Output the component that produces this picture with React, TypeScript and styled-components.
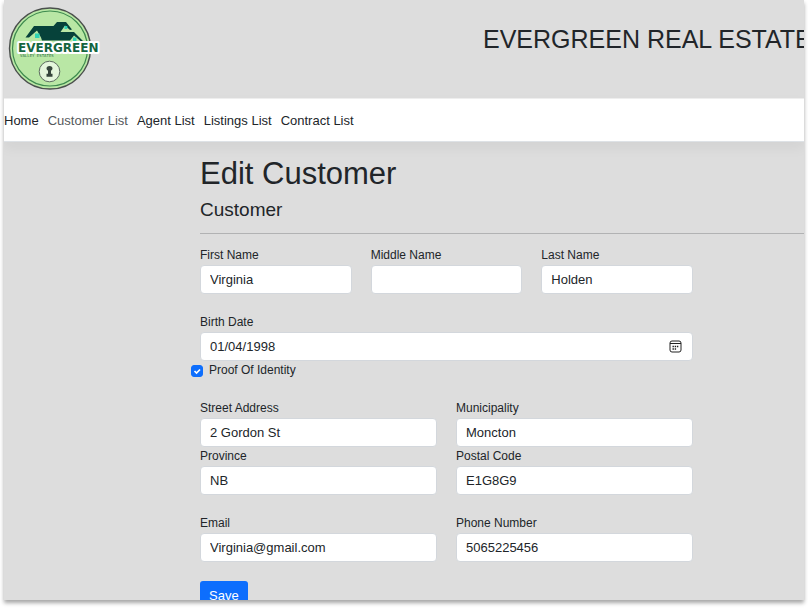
import React from "react";
import styled, { createGlobalStyle } from "styled-components";

const GlobalStyle = createGlobalStyle`
  *, *::before, *::after { box-sizing: border-box; }
  body {
    margin: 0;
    background: #fff;
    color: #212529;
    font-family: "Liberation Sans", Arial, sans-serif;
    font-size: 12px;
    line-height: 19px;
  }
`;

const Stage = styled.div`
  height: 100vh;
  padding: 0 4px 8px;
  overflow: hidden;
`;

const Page = styled.div`
  height: 100%;
  overflow: hidden;
  background: #ddd;
  box-shadow: 0 3px 4px rgba(0, 0, 0, 0.35);
`;

const Header = styled.header`
  display: flex;
  justify-content: space-between;
  height: 98px;
  padding: 5px 0 0 4px;
  overflow: hidden;
`;

const Logo = styled.svg`
  flex: none;
  width: 96px;
  height: 88px;
`;

const SiteTitle = styled.div`
  flex: none;
  width: 321px;
  padding-top: 19px;
  font-size: 25px;
  line-height: 30px;
  white-space: nowrap;
`;

const Nav = styled.nav`
  display: flex;
  align-items: center;
  gap: 9px;
  height: 44px;
  background: #fff;
  border-top: 1px solid #eee;
  border-bottom: 1px solid #dee2e6;
  box-shadow: 0 6px 12px rgba(0, 0, 0, 0.05);
  font-size: 13px;
`;

const NavLink = styled.a<{ $muted?: boolean }>`
  color: ${(p) => (p.$muted ? "#55595c" : "#212529")};
  text-decoration: none;
`;

const Main = styled.main`
  padding: 13px 0 0 196px;
`;

const Title = styled.h1`
  margin: 0 0 6px;
  font-size: 31px;
  font-weight: 400;
  line-height: 37px;
`;

const Subtitle = styled.h2`
  margin: 0;
  font-size: 19px;
  font-weight: 400;
  line-height: 23px;
`;

const Rule = styled.hr`
  margin: 12px 0;
  border: 0;
  border-top: 1px solid #b1b2b3;
`;

const Form = styled.form`
  display: flex;
  flex-direction: column;
  gap: 19px;
  margin-right: 111px;
`;

const Group = styled.div<{ $columns?: number }>`
  display: grid;
  grid-template-columns: repeat(${(p) => p.$columns ?? 1}, minmax(0, 1fr));
  column-gap: 19px;
`;

const FieldBox = styled.div`
  display: flex;
  flex-direction: column;
`;

const InputWrap = styled.div`
  position: relative;
  display: flex;
`;

const Input = styled.input`
  width: 100%;
  height: 29px;
  padding: 0 9px;
  border: 1px solid #d3d7dc;
  border-radius: 4px;
  background: #fff;
  color: #212529;
  font: inherit;
  font-size: 13px;

  &::-webkit-calendar-picker-indicator { opacity: 0; }
  &::-webkit-datetime-edit,
  &::-webkit-datetime-edit-fields-wrapper,
  &::-webkit-datetime-edit-month-field,
  &::-webkit-datetime-edit-day-field,
  &::-webkit-datetime-edit-year-field { padding: 0; }
`;

const CalendarIcon = styled.svg`
  position: absolute;
  top: 8px;
  right: 11px;
  width: 13px;
  height: 13px;
  pointer-events: none;
`;

const CheckRow = styled.div`
  display: flex;
  align-items: center;
  gap: 6px;
  margin-left: -9px;
`;

const CheckBox = styled.span`
  position: relative;
  display: flex;
  width: 12px;
  height: 12px;
`;

const CheckInput = styled.input`
  appearance: none;
  width: 12px;
  height: 12px;
  margin: 0;
  border: 1px solid #adb5bd;
  border-radius: 3px;
  background: #fff;

  &:checked { background: #0d6efd; border-color: #0d6efd; }
`;

const CheckMark = styled.svg`
  position: absolute;
  inset: 0;
  width: 12px;
  height: 12px;
  pointer-events: none;
`;

const SaveButton = styled.button`
  align-self: flex-start;
  height: 29px;
  padding: 0 9px;
  border: 0;
  border-radius: 3px;
  background: #0d6efd;
  color: #fff;
  font: inherit;
  font-size: 13px;
`;

function Field(props: { id: string; label: string; value?: string; type?: string }) {
  const { id, label, value = "", type = "text" } = props;
  return (
    <FieldBox>
      <label htmlFor={id}>{label}</label>
      <InputWrap>
        <Input id={id} type={type} defaultValue={value} />
        {type === "date" && (
          <CalendarIcon viewBox="0 0 13 13" fill="none" stroke="#222" aria-hidden="true">
            <rect x="1" y="1" width="11" height="11" rx="2" />
            <path d="M1 3.500h11" />
            <path d="M3.500 6.500h6M3.500 9h4" strokeWidth="1.4" strokeDasharray="1.400 .8" />
          </CalendarIcon>
        )}
      </InputWrap>
    </FieldBox>
  );
}

function EvergreenLogo() {
  return (
    <Logo viewBox="8 5 96 88" role="img" aria-label="Evergreen">
      <circle cx="50" cy="48.5" r="40.5" fill="#b9e7a5" stroke="#4a4f4c" strokeWidth="1.4" />
      <circle cx="50" cy="48.5" r="37.5" fill="none" stroke="#3d8a4e" strokeWidth="1.2" />
      <path
        d="M25.500 37.500 34 26H53.500L57 22H66L72 29.500 70 30 65 25.500 60.500 32H74L83 41H80.500L74 35.500 70 40.500H42L41 37.500 37 30.500 29 37.500Z"
        fill="#06423a"
      />
      <path d="M35 33.500h4.500v4.500h-4.500zM64.500 26h2.800v3h-2.800zM73 37.500h3.500v4h-3.500z" fill="#2fd3b5" />
      <text
        x="18" y="52" fontFamily="DejaVu Sans, sans-serif" fontWeight="700" fontSize="12"
        fill="#14653f" stroke="#fff" strokeWidth="4" strokeLinejoin="round" paintOrder="stroke"
      >EVERGREEN</text>
      <text x="20" y="57" fontFamily="DejaVu Sans Mono, monospace" fontSize="4" fill="#2c6b45">VALLEY ESTATES</text>
      <circle cx="49.5" cy="71.5" r="10.300" fill="#e4f6dc" stroke="#5c6b60" />
      <path d="M46.500 68.500a3 2.500 0 0 1 6 0q0 1.500-1.500 2.300v3h1.500v3h-6v-3h1.500v-3q-1.500-.8-1.500-2.300z" fill="#36463c" />
    </Logo>
  );
}

export default function App() {
  return (
    <>
      <GlobalStyle />
      <Stage>
        <Page>
          <Header>
            <EvergreenLogo />
            <SiteTitle>EVERGREEN REAL ESTATE</SiteTitle>
          </Header>
          <Nav>
            <NavLink href="#home">Home</NavLink>
            <NavLink href="#customers" $muted>Customer List</NavLink>
            <NavLink href="#agents">Agent List</NavLink>
            <NavLink href="#listings">Listings List</NavLink>
            <NavLink href="#contracts">Contract List</NavLink>
          </Nav>
          <Main>
            <Title>Edit Customer</Title>
            <Subtitle>Customer</Subtitle>
            <Rule />
            <Form>
              <Group $columns={3}>
                <Field id="first" label="First Name" value="Virginia" />
                <Field id="middle" label="Middle Name" />
                <Field id="last" label="Last Name" value="Holden" />
              </Group>
              <Group>
                <Field id="birth" label="Birth Date" value="1998-01-04" type="date" />
                <CheckRow>
                  <CheckBox>
                    <CheckInput id="proof" type="checkbox" defaultChecked />
                    <CheckMark viewBox="0 0 12 12" fill="none" stroke="#fff" strokeWidth="1.7" aria-hidden="true">
                      <path d="m3.500 6 2 2 3.500-3.500" />
                    </CheckMark>
                  </CheckBox>
                  <label htmlFor="proof">Proof Of Identity</label>
                </CheckRow>
              </Group>
              <Group $columns={2}>
                <Field id="street" label="Street Address" value="2 Gordon St" />
                <Field id="city" label="Municipality" value="Moncton" />
                <Field id="province" label="Province" value="NB" />
                <Field id="postal" label="Postal Code" value="E1G8G9" />
              </Group>
              <Group $columns={2}>
                <Field id="email" label="Email" value="Virginia@gmail.com" type="email" />
                <Field id="phone" label="Phone Number" value="5065225456" type="tel" />
              </Group>
              <SaveButton type="button">Save</SaveButton>
            </Form>
          </Main>
        </Page>
      </Stage>
    </>
  );
}
